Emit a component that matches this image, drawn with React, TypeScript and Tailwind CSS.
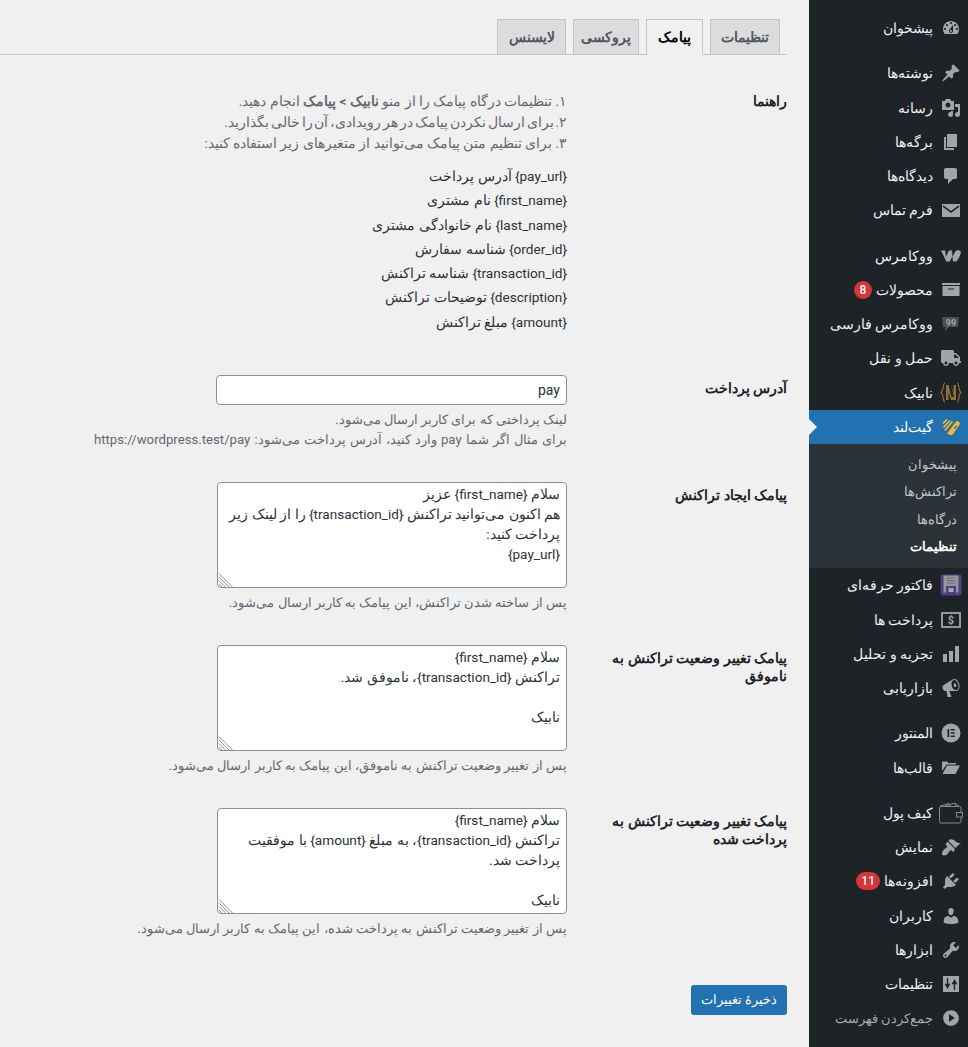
import React from "react";
import { FaTruck } from "react-icons/fa";

const P = ({ d, className = "" }: { d: string; className?: string }) => (
  <svg viewBox="0 0 20 20" className={"w-5 h-5 fill-[#a0a5aa] " + className}><path d={d} /></svg>
);

const icons: Record<string, React.ReactNode> = {
  dash: <P d="M3.76 16h12.48c1.1-1.37 1.76-3.11 1.76-5 0-4.42-3.58-8-8-8s-8 3.58-8 8c0 1.89.66 3.63 1.76 5zM10 4c.55 0 1 .45 1 1s-.45 1-1 1-1-.45-1-1 .45-1 1-1zM6 6c.55 0 1 .45 1 1s-.45 1-1 1-1-.45-1-1 .45-1 1-1zm8 0c.55 0 1 .45 1 1s-.45 1-1 1-1-.45-1-1 .45-1 1-1zm-5.37 5.55L12 7v6c0 1.1-.9 2-2 2s-2-.9-2-2c0-.57.24-1.08.63-1.45zM4 10c.55 0 1 .45 1 1s-.45 1-1 1-1-.45-1-1 .45-1 1-1zm12 0c.55 0 1 .45 1 1s-.45 1-1 1-1-.45-1-1 .45-1 1-1zm-5 3c0-.55-.45-1-1-1s-1 .45-1 1 .45 1 1 1 1-.45 1-1z" />,
  pin: <P d="M10.44 3.02l1.82-1.82 6.36 6.35-1.83 1.82c-1.05-.68-2.48-.57-3.41.36l-.75.75c-.92.93-1.04 2.35-.35 3.41l-1.83 1.82-2.41-2.41-2.8 2.79c-.42.42-3.38 2.71-3.8 2.29s1.86-3.39 2.28-3.81l2.79-2.79L4.1 9.36l1.83-1.82c1.05.69 2.48.57 3.4-.36l.75-.75c.93-.92 1.05-2.35.36-3.41z" />,
  media: <P d="M13 11V4c0-.55-.45-1-1-1h-1.67L9 1H5L3.67 3H2c-.55 0-1 .45-1 1v7c0 .55.45 1 1 1h10c.55 0 1-.45 1-1zM7 4.5c1.38 0 2.5 1.12 2.5 2.5S8.38 9.5 7 9.5 4.5 8.38 4.5 7 5.62 4.5 7 4.5zM14 6h5v10.5c0 1.38-1.12 2.5-2.5 2.5S14 17.88 14 16.5s1.12-2.5 2.5-2.5c.17 0 .34.02.5.05V9h-3V6zm-4 8.05V13h2v3.5c0 1.38-1.12 2.5-2.5 2.5S7 17.88 7 16.5 8.12 14 9.5 14c.17 0 .34.02.5.05z" />,
  page: <P d="M6 15V2h10v13H6zm-1 1h8v2H3V5h2v11z" />,
  comment: <P d="M5 2h9q.82 0 1.41.59T16 4v7q0 .82-.59 1.41T14 13h-2l-5 5v-5H5q-.82 0-1.41-.59T3 11V4q0-.82.59-1.41T5 2z" />,
  mail: <svg viewBox="0 0 18 13" className="w-[18px] h-[13px]"><rect width="18" height="13" fill="#a0a5aa" /><path d="M1 2.200 9 8l8-5.800" fill="none" stroke="#1d2327" strokeWidth="1.600" /></svg>,
  woo: (
    <svg viewBox="0 0 20 12" className="w-5 h-3 fill-[#a0a5aa]">
      <path d="M0 .5h4.200l.7 6.200L8 .5h3l.6 6.200L14.400 1.200c1.400-1.400 4.600-1.100 5.300.4.700 1.600-1.500 6.700-4.300 10H12l-.6-5-2.700 5H5.300z" />
    </svg>
  ),
  archive: (
    <svg viewBox="0 0 18 13" className="w-[18px] h-[13px]">
      <rect width="18" height="2" fill="#a0a5aa" />
      <path fillRule="evenodd" d="M.5 3h17v10H.5zM6 5.500v1h6v-1z" fill="#a0a5aa" />
    </svg>
  ),
  wp: (
    <svg viewBox="0 0 20 16" className="w-5 h-4">
      <path d="M1 1h17l-1 10H8l-4 4 0-4H2z" fill="#4b5055" />
      <text x="10" y="10" fontSize="9" fontWeight="700" textAnchor="middle" fill="#a0a5aa" fontFamily="Roboto">99</text>
    </svg>
  ),
  truck: <FaTruck className="w-5 h-5 text-[#a0a5aa]" />,
  nabik: (
    <svg viewBox="0 0 22 21" className="w-[22px] h-[21px]">
      <path d="M5 1C2.500 1 4 8.500 1 10.500 4 12.500 2.500 20 5 20M17 1c2.500 0 1 7.500 4 9.500C18 12.500 19.500 20 17 20" fill="none" stroke="#8d7236" strokeWidth="1.200" />
      <path d="M6 3h10v15H6z" fill="#8d7236" />
      <path d="M8.500 3h2.500l3 12h-2.500z" fill="#1d2327" />
      <path d="M11 3h2.500v8zM8.500 10l2.500 8H8.500z" fill="#1d2327" />
    </svg>
  ),
  gate: (
    <svg viewBox="0 0 18 18" className="w-[18px] h-[18px]">
      <path d="M5 15.500 14 3.800c.7-.9 1.600-.9 2.300-.3l1 .9c.7.700.8 1.500.2 2.300l-6.800 9.800c-.7.900-1.600 1-2.400.5z" fill="#fbb62f" />
      <path d="M11.800 10.200l2.300-2.600 1.100 1-2.300 2.600z" fill="#2271b1" />
      <path d="M1 5.500 5 1.500M1.500 9.500 8 2.500M2.800 12.500 10.500 3.500" stroke="#fbb62f" strokeWidth="1.700" fill="none" />
    </svg>
  ),
  factor: (
    <svg viewBox="0 0 22 22" className="w-[22px] h-[22px]">
      <rect x="0.500" y="0.500" width="21" height="21" rx="2" fill="#4f4183" />
      <rect x="3.500" y="1.500" width="15" height="17" fill="#93959c" />
      <rect x="6" y="12" width="10" height="8" fill="#4f4183" />
      <path d="M7 4h8M7 6.500h8M7 9h8" stroke="#6a6d74" strokeWidth="1" />
      <rect x="8.500" y="14" width="5" height="4" fill="#a5a7ae" />
    </svg>
  ),
  pay: (
    <svg viewBox="0 0 20 16" className="w-[20px] h-[16px]">
      <rect x="1" y="1" width="18" height="14" fill="none" stroke="#a0a5aa" strokeWidth="1.800" />
      <text x="10" y="12.200" fontSize="11" fontWeight="700" textAnchor="middle" fill="#a0a5aa" fontFamily="Roboto">$</text>
    </svg>
  ),
  chart: <P d="M18 18V2h-4v16h4zm-6 0V7H8v11h4zm-6 0v-8H2v8h4z" />,
  mega: (
    <svg viewBox="0 0 20 20" className="w-5 h-5 fill-[#a0a5aa]">
      <path fillRule="evenodd" d="M18.200 6c.9 3.200-.2 6.200-2.400 6.900l-.8.100H8.200l2.200 5.500c0 .3-.2.500-.5.500H7c-.3 0-.5-.2-.5-.5l-1-5.500H4.300c-1.100.1-2.200-1-2.600-2.500-.5-1.600 0-3.100 1-3.500l9-5.400.9-.4c2.200-.6 4.800 1.600 5.600 4.800zm-2.700 5.900c1.900-.6 2.600-3 1.700-5.700-.8-2.800-2.900-4.700-4.700-4-1.900.6-2.500 3.100-1.700 5.800.8 2.800 2.800 4.600 4.700 3.900z" />
      <ellipse cx="14" cy="7.300" rx="1.300" ry="2" />
    </svg>
  ),
  elementor: (
    <svg viewBox="0 0 20 20" className="w-5 h-5">
      <circle cx="10" cy="10" r="9.500" fill="#a0a5aa" />
      <path d="M6.500 6h1.700v8H6.500zM9.700 6h4v1.600h-4zM9.700 9.200h4v1.600h-4zM9.700 12.400h4V14h-4z" fill="#1d2327" />
    </svg>
  ),
  folder: (
    <svg viewBox="0 0 18 13" className="w-[18px] h-[13px] fill-[#a0a5aa]">
      <path d="M0 1.500C0 .8.500.5 1 .5h4l1.500 1.500H14v1.500H4.500L0 10z" />
      <path d="M5 4.500h13L13.500 13H.5z" />
    </svg>
  ),
  wallet: (
    <svg viewBox="0 0 24 22" className="w-6 h-[22px]" fill="none" stroke="#858a8f" strokeWidth="1">
      <rect x="0.500" y="4.500" width="21.500" height="16.500" rx="1.500" />
      <rect x="17.500" y="10.500" width="6" height="4.500" fill="#1d2327" />
      <path d="M1 4 10 1.500l1 2.500M6 4l10-3 1 3M16 1.500 20 4" />
    </svg>
  ),
  brush: (
    <svg viewBox="0 0 20 20" className="w-5 h-5 fill-[#a0a5aa]">
      <path d="M14.480 11.060 7.410 3.990l1.500-1.500c.5-.56 2.300-.47 3.510.32 1.210.8 1.430 1.280 2.910 2.100 1.180.64 2.450 1.260 4.450.85zm-.71.71L6.700 4.700 4.930 6.470c-.39.39-.39 1.020 0 1.410l1.060 1.060c.39.39.39 1.030 0 1.420-.6.6-3.500 2.400-4.200 3.600-.7 1.200-1.200 3.200-.3 4.100.9.900 2.900.4 4.100-.3 1.200-.7 3-3.600 3.600-4.200.39-.39 1.030-.39 1.420 0l1.060 1.060c.39.39 1.020.39 1.410 0z" />
    </svg>
  ),
  plug: <P d="M13.110 4.360L9.870 7.600 8 5.730l3.240-3.240c.35-.34 1.050-.2 1.560.32.52.51.66 1.210.31 1.550zm-8 1.770l.91-1.120 9.010 9.010-1.190.84c-.71.71-2.630 1.160-3.820 1.160H6.140L4.900 17.260c-.59.59-1.540.59-2.120 0-.59-.58-.59-1.530 0-2.120l1.240-1.240v-3.880c0-1.130.4-3.190 1.090-3.890zm7.260 3.970l3.240-3.240c.34-.35 1.040-.21 1.550.31.52.51.66 1.210.31 1.550l-3.240 3.250z" />,
  users: <P d="M10 9.250c-2.270 0-2.730-3.440-2.730-3.440C7 4.020 7.820 2 9.970 2c2.160 0 2.980 2.020 2.710 3.810 0 0-.41 3.440-2.680 3.440zm0 2.570L12.720 10c2.390 0 4.520 2.330 4.520 4.530v2.490s-3.650 1.130-7.240 1.130c-3.650 0-7.240-1.130-7.240-1.130v-2.490c0-2.250 1.940-4.480 4.470-4.480z" />,
  tools: <P d="M16.680 9.770c-1.340 1.340-3.300 1.670-4.950.99l-5.410 6.520c-.99.99-2.590.99-3.580 0s-.99-2.590 0-3.570l6.520-5.420c-.68-1.650-.35-3.610.99-4.950 1.280-1.280 3.120-1.620 4.720-1.060l-2.890 2.890 2.820 2.820 2.860-2.870c.53 1.580.18 3.390-1.080 4.650zM3.810 16.210c.4.39 1.040.39 1.430 0 .4-.4.4-1.040 0-1.430-.39-.4-1.030-.4-1.430 0-.39.39-.39 1.030 0 1.430z" />,
  settings: (
    <svg viewBox="0 0 16 16" className="w-4 h-4">
      <rect width="16" height="16" fill="#a0a5aa" />
      <path d="M4.500 2v8M2.800 8.500h3.400l-1.700 3z M11.500 14V6M9.800 7.500h3.400l-1.700-3z" stroke="#1d2327" strokeWidth="1.400" fill="#1d2327" />
    </svg>
  ),
  collapse: <P d="M10 2.160c4.330 0 7.840 3.510 7.840 7.840s-3.510 7.840-7.840 7.840S2.160 14.330 2.160 10 5.710 2.160 10 2.160zm2 11.720V6.120L6.180 9.970z" className="-scale-x-100" />,
};

type Item = { t: string; i: string; first?: boolean; badge?: string };
const groupA: Item[] = [
  { t: "پیشخوان", i: "dash" },
  { t: "نوشته‌ها", i: "pin", first: true },
  { t: "رسانه", i: "media" },
  { t: "برگه‌ها", i: "page" },
  { t: "دیدگاه‌ها", i: "comment" },
  { t: "فرم تماس", i: "mail" },
  { t: "ووکامرس", i: "woo", first: true },
  { t: "محصولات", i: "archive", badge: "8" },
  { t: "ووکامرس فارسی", i: "wp" },
  { t: "حمل و نقل", i: "truck" },
  { t: "نابیک", i: "nabik" },
];
const groupB: Item[] = [
  { t: "فاکتور حرفه‌ای", i: "factor" },
  { t: "پرداخت ها", i: "pay" },
  { t: "تجزیه و تحلیل", i: "chart" },
  { t: "بازاریابی", i: "mega" },
  { t: "المنتور", i: "elementor", first: true },
  { t: "قالب‌ها", i: "folder" },
  { t: "کیف پول", i: "wallet", first: true },
  { t: "نمایش", i: "brush" },
  { t: "افزونه‌ها", i: "plug", badge: "11" },
  { t: "کاربران", i: "users" },
  { t: "ابزارها", i: "tools" },
  { t: "تنظیمات", i: "settings" },
];

function Row({ item }: { item: Item }) {
  return (
    <div className={"flex items-center h-[34.250px] text-[#f0f0f1] text-[13.500px] font-medium " + (item.first ? "mt-[11px]" : "")}>
      <div className="w-[35px] flex justify-center items-center shrink-0">{icons[item.i]}</div>
      <span className="whitespace-nowrap">{item.t}</span>
      {item.badge && (
        <span className="mr-[4px] min-w-[18px] h-[18px] px-[5px] rounded-full bg-[#d63638] text-white text-xs flex items-center justify-center">{item.badge}</span>
      )}
    </div>
  );
}

function Sidebar() {
  return (
    <aside className="w-[159px] shrink-0 bg-[#1d2327] pt-[11px] min-h-[1047px]">
      {groupA.map((x) => <Row key={x.t} item={x} />)}
      <div className="relative flex items-center h-[34px] bg-[#2271b1] text-white text-[13.500px] font-medium">
        <div className="w-[35px] flex justify-center items-center">{icons.gate}</div>
        <span>گیت‌لند</span>
        <span className="absolute left-0 top-[9px] border-y-8 border-y-transparent border-l-8 border-l-[#f0f0f1]" />
      </div>
      <div className="bg-[#2c3338] pt-[7px] h-[124.500px] text-[13px] pr-[11px]">
        <div className="h-[27.500px] flex items-center text-[#c3c4c7]">پیشخوان</div>
        <div className="h-[27.500px] flex items-center text-[#c3c4c7]">تراکنش‌ها</div>
        <div className="h-[27.500px] flex items-center text-[#c3c4c7]">درگاه‌ها</div>
        <div className="h-[27.500px] flex items-center text-white font-bold">تنظیمات</div>
      </div>
      {groupB.map((x) => <Row key={x.t} item={x} />)}
      <div className="flex items-center h-[34px] text-[#a7aaad] text-[13px]">
        <div className="w-[35px] flex justify-center items-center shrink-0">{icons.collapse}</div>
        <span>جمع‌کردن فهرست</span>
      </div>
    </aside>
  );
}

const Tab = ({ t, w, active }: { t: string; w: string; active?: boolean }) => (
  <div className={w + " h-[36px] border border-[#c3c4c7] text-sm font-semibold flex items-center justify-center " + (active ? "bg-[#f0f0f1] border-b-[#f0f0f1] text-black" : "bg-[#dcdcde] text-[#50575e]")}>{t}</div>
);

const Section = ({ label, value, desc, size }: { label: string; value: string; desc: string; size: string }) => (
  <div className="flex mt-[32px]">
    <div className="w-[220px] shrink-0 pt-[4px] pl-[30px] text-sm font-semibold text-[#1d2327] leading-[18px]">{label}</div>
    <div>
      <div className="relative w-[350px] h-[106px]">
        <textarea readOnly dir="rtl" wrap="off" defaultValue={value} className="block w-full h-full resize-none overflow-hidden bg-white border border-[#8c8f94] rounded-[4px] px-[6px] py-[1px] text-[13.600px] leading-[20px] text-[#2c3338] outline-none" />
        <svg viewBox="0 0 15 15" className="absolute left-[1px] bottom-[1px] w-[15px] h-[15px]" stroke="#8f8f8f" strokeWidth="1">
          <path d="M1 1.500 14.500 15M1 5 11 15M1 8.500 7.500 15M1 12 4 15" />
        </svg>
      </div>
      <p className={"mt-[5px] leading-[20px] text-[#646970] whitespace-nowrap " + size}>{desc}</p>
    </div>
  </div>
);

export default function App() {
  return (
    <div dir="rtl" className="flex w-[968px] h-[1047px] overflow-hidden bg-[#f0f0f1] font-['Roboto','Noto_Sans','Open_Sans',sans-serif]">
      <Sidebar />
      <main className="flex-1 pr-[22px]">
        <div className="mt-[19px] h-[36px] flex gap-[7px] pr-[7px] border-b border-[#c3c4c7]">
          <Tab t="تنظیمات" w="w-[70px]" />
          <Tab t="پیامک" w="w-[57px]" active />
          <Tab t="پروکسی" w="w-[66px]" />
          <Tab t="لایسنس" w="w-[69px]" />
        </div>
        <div className="flex mt-[36px]">
          <div className="w-[220px] shrink-0 text-sm font-semibold text-[#1d2327]">راهنما</div>
          <div className="text-[13.600px] text-[#646970]">
            <p className="leading-[21px]">۱. تنظیمات درگاه پیامک را از منو <b>نابیک &gt; پیامک</b> انجام دهید.</p>
            <p className="leading-[21px] [word-spacing:-1.500px]">۲. برای ارسال نکردن پیامک در هر رویدادی، آن را خالی بگذارید.</p>
            <p className="leading-[21px]">۳. برای تنظیم متن پیامک می‌توانید از متغیرهای زیر استفاده کنید:</p>
            <div className="mt-[10px] text-[#2c3338]">
              {[
                "{pay_url} آدرس پرداخت",
                "{first_name} نام مشتری",
                "{last_name} نام خانوادگی مشتری",
                "{order_id} شناسه سفارش",
                "{transaction_id} شناسه تراکنش",
                "{description} توضیحات تراکنش",
                "{amount} مبلغ تراکنش",
              ].map((s) => <div key={s} className="h-[24.300px] leading-[24px]">{s}</div>)}
            </div>
          </div>
        </div>
        <div className="flex mt-[41px]">
          <div className="w-[220px] shrink-0 pt-[3px] text-sm font-semibold text-[#1d2327]">آدرس پرداخت</div>
          <div>
            <input readOnly dir="ltr" defaultValue="pay" className="block w-[351px] h-[30px] bg-white border border-[#8c8f94] rounded-[4px] px-[6px] text-sm text-[#2c3338] text-right outline-none" />
            <p className="mt-[5px] text-[13px] leading-[20px] text-[#646970]">لینک پرداختی که برای کاربر ارسال می‌شود.</p>
            <p className="text-[13.200px] [word-spacing:0.800px] leading-[20px] text-[#646970] whitespace-nowrap">برای مثال اگر شما pay وارد کنید، آدرس پرداخت می‌شود: https://wordpress.test/pay</p>
          </div>
        </div>
        <Section size="text-[13.200px]" label="پیامک ایجاد تراکنش" value={"سلام {first_name} عزیز\nهم اکنون می‌توانید تراکنش {transaction_id} را از لینک زیر\nپرداخت کنید:\n{pay_url}"} desc="پس از ساخته شدن تراکنش، این پیامک به کاربر ارسال می‌شود." />
        <Section size="text-[13.400px]" label="پیامک تغییر وضعیت تراکنش به ناموفق" value={"سلام {first_name}\nتراکنش {transaction_id}، ناموفق شد.\n\nنابیک"} desc="پس از تغییر وضعیت تراکنش به ناموفق، این پیامک به کاربر ارسال می‌شود." />
        <Section size="text-[13.400px]" label="پیامک تغییر وضعیت تراکنش به پرداخت شده" value={"سلام {first_name}\nتراکنش {transaction_id}، به مبلغ {amount} با موفقیت\nپرداخت شد.\n\nنابیک"} desc="پس از تغییر وضعیت تراکنش به پرداخت شده، این پیامک به کاربر ارسال می‌شود." />
        <button className="block mt-[46px] w-[96px] h-[30px] bg-[#2271b1] rounded-[3px] text-white text-[13px]">ذخیرهٔ تغییرات</button>
      </main>
    </div>
  );
}
